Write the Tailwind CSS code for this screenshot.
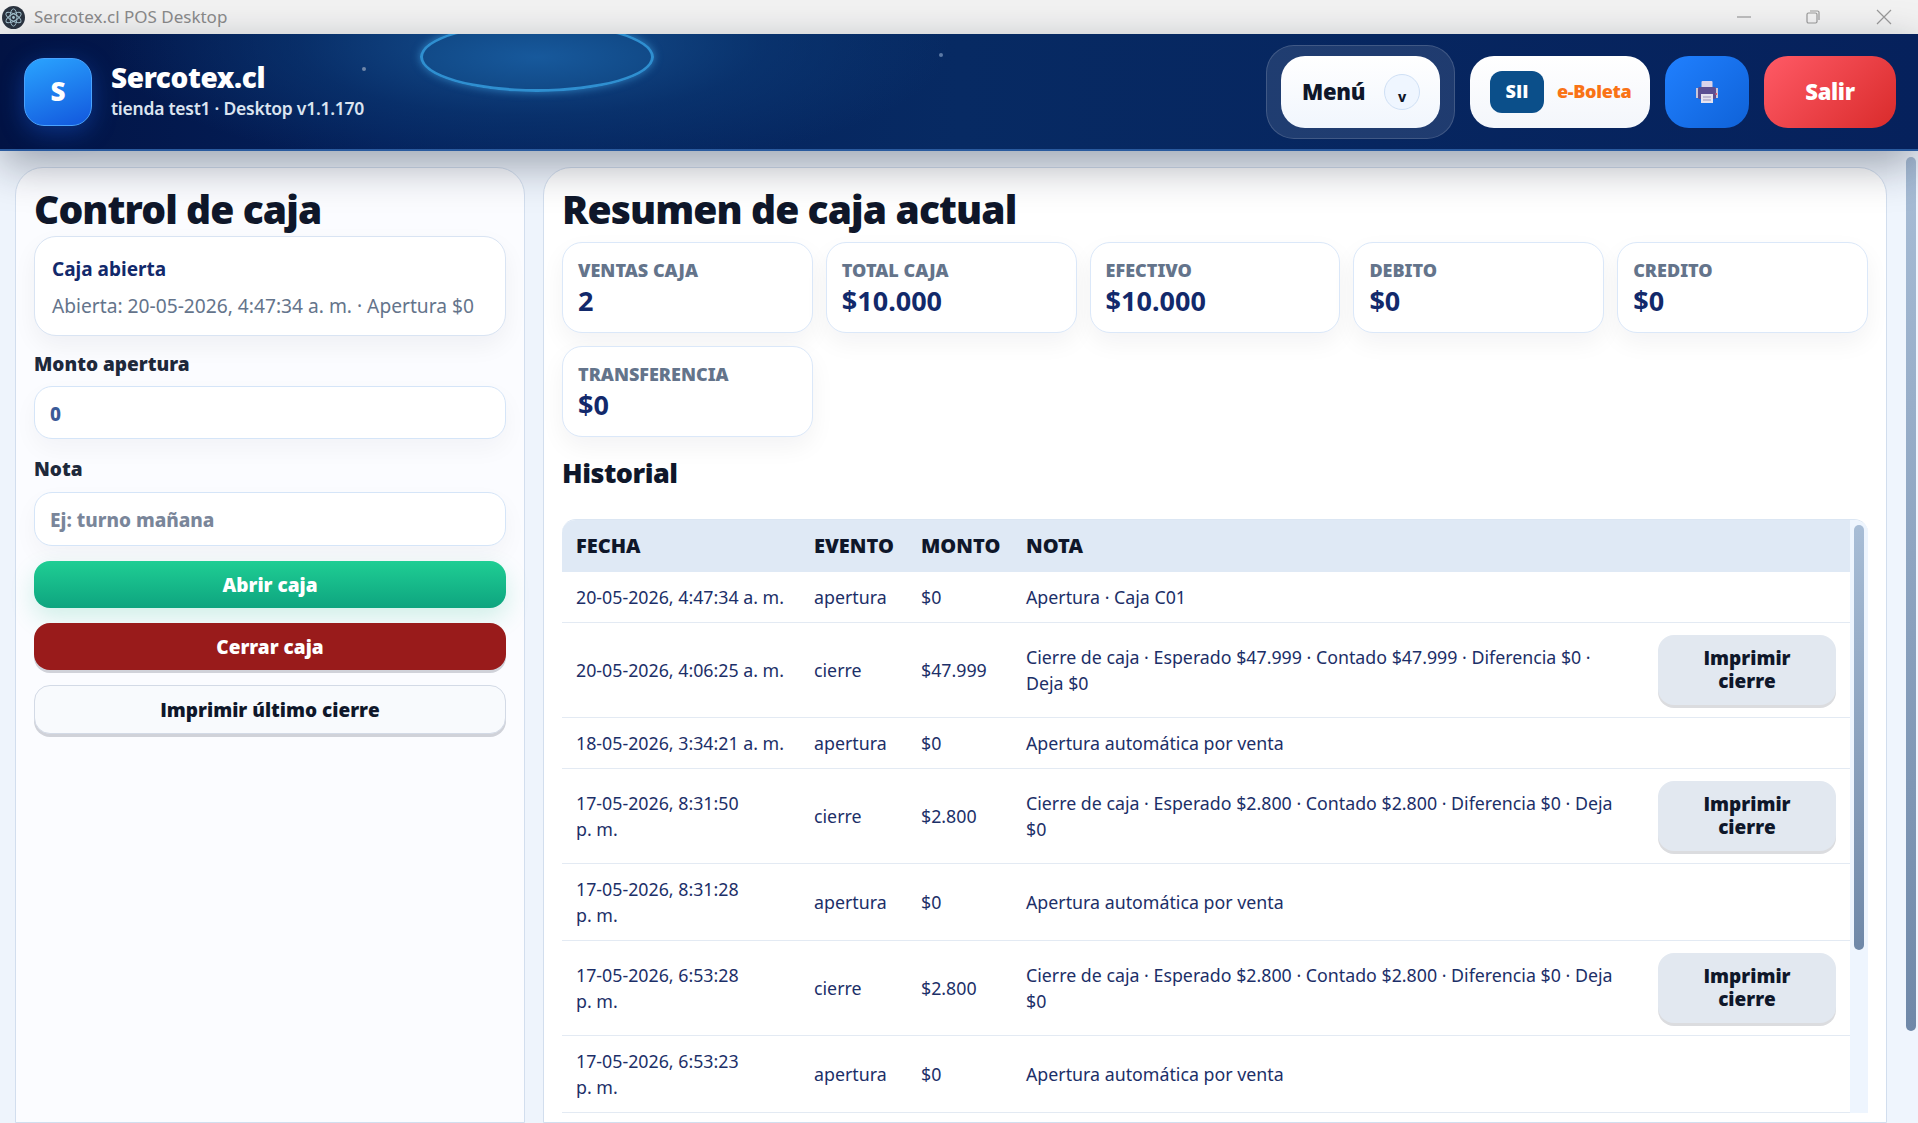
<!DOCTYPE html>
<html lang="es">
<head>
<meta charset="utf-8">
<title>Sercotex.cl POS Desktop</title>
<script src="https://cdn.jsdelivr.net/npm/@tailwindcss/browser@4"></script>
</head>
<body class="h-screen overflow-hidden flex flex-col bg-[#eef4fc] font-['Noto_Sans',sans-serif] text-[#1c2f68]">

  <!-- title bar -->
  <div class="h-[34px] shrink-0 bg-[#f2f2f2] flex items-center">
    <svg class="ml-[2px] w-[23px] h-[23px]" viewBox="0 0 20 20">
      <circle cx="10" cy="10" r="10" fill="#2b3440"/>
      <g fill="none" stroke="#a9c8d4" stroke-width=".8">
        <ellipse cx="10" cy="10" rx="7.500" ry="3" transform="rotate(30 10 10)"/>
        <ellipse cx="10" cy="10" rx="7.500" ry="3" transform="rotate(90 10 10)"/>
        <ellipse cx="10" cy="10" rx="7.500" ry="3" transform="rotate(150 10 10)"/>
      </g>
      <circle cx="10" cy="10" r="1.200" fill="#a9c8d4"/>
    </svg>
    <span class="ml-[9px] text-[17px] text-[#8a8a8a]">Sercotex.cl POS Desktop</span>
    <div class="ml-auto flex items-center">
      <svg class="w-[16px] h-[16px] mr-[53px]" viewBox="0 0 16 16"><path d="M1 8h14" stroke="#999" stroke-width="1.200"/></svg>
      <svg class="w-[16px] h-[16px] mr-[55px]" viewBox="0 0 16 16" fill="none" stroke="#999" stroke-width="1.200"><rect x="2" y="4" width="10" height="10" rx="1.500"/><path d="M5 2h7.500A1.500 1.500 0 0 1 14 3.500V11"/></svg>
      <svg class="w-[16px] h-[16px] mr-[26px]" viewBox="0 0 16 16"><path d="M1 1l14 14M15 1L1 15" stroke="#999" stroke-width="1.200"/></svg>
    </div>
  </div>

  <!-- header -->
  <header class="relative z-10 h-[117px] shrink-0 border-b-2 border-[#2a5a9e] bg-[radial-gradient(ellipse_420px_130px_at_530px_10px,#15508f_0%,rgba(12,60,120,0.55)_55%,rgba(6,33,92,0)_100%),linear-gradient(90deg,#021344_0%,#04205a_20%,#072a63_50%,#06215c_100%)] shadow-[0_14px_44px_rgba(15,23,42,0.36)] flex items-center">
    <div class="absolute inset-0 overflow-hidden">
      <div class="absolute left-[420px] top-[-12px] w-[234px] h-[70px] rounded-[50%] border-[3px] border-[#2f8fd0] bg-[radial-gradient(ellipse_at_center,#17599c,#0f4480)] shadow-[0_0_8px_rgba(70,170,235,0.6)]"></div>
      <div class="absolute left-[362px] top-[33px] w-[4px] h-[4px] rounded-full bg-[#6f86a8]"></div>
      <div class="absolute left-[939px] top-[19px] w-[4px] h-[4px] rounded-full bg-[#5b79a5]"></div>
    </div>
    <div class="relative ml-[24px] w-[68px] h-[68px] rounded-[20px] border border-[#4aa3ff] bg-[linear-gradient(160deg,#2aa4ff,#1257dd)] shadow-[0_6px_24px_rgba(30,110,255,0.35)] flex items-center justify-center text-white font-black text-[26px]">S</div>
    <div class="relative ml-[19px] text-white">
      <div class="text-[28px] leading-[35px] font-black tracking-[-0.4px] mt-[-2px]">Sercotex.cl</div>
      <div class="text-[17.500px] leading-[25px] mt-[1px] font-semibold tracking-[-0.25px] text-[#dbe4f0]">tienda test1 · Desktop v1.1.170</div>
    </div>
    <div class="relative ml-auto mr-[22px] flex items-center">
      <div class="p-[10px_14px] rounded-[28px] border border-white/15 bg-white/10">
        <button class="w-[159px] h-[72px] rounded-[24px] bg-[linear-gradient(180deg,#ffffff,#f1f6fd)] flex items-center pl-[21px] text-[#0f172a] font-black text-[22px] tracking-[-0.3px]">
          Menú
          <span class="ml-auto mr-[20px] w-[36px] h-[36px] rounded-full border border-[#cfe0f5] bg-[#eff6ff] flex items-end justify-center pb-[3px] text-[14px] leading-[18px] font-extrabold">v</span>
        </button>
      </div>
      <button class="ml-[15px] w-[180px] h-[72px] rounded-[24px] bg-[linear-gradient(180deg,#ffffff,#f3f6fb)] flex items-center pl-[20px]">
        <span class="w-[54px] h-[42px] rounded-[12px] bg-[#0b4f8a] text-white font-['Open_Sans',sans-serif] font-extrabold text-[18px] flex items-center justify-center">SII</span>
        <span class="ml-[13px] text-[#f97316] font-black text-[18px] tracking-[-0.3px]">e-Boleta</span>
      </button>
      <button class="ml-[15px] w-[84px] h-[72px] rounded-[24px] bg-[linear-gradient(135deg,#2080ff,#0f62d8)] flex items-center justify-center">
        <svg class="w-[24px] h-[24px]" viewBox="0 0 24 24">
          <rect x="6.500" y="1" width="11" height="8" rx="1" fill="#d9d3ea"/>
          <rect x="1" y="8" width="3" height="10" fill="#c9c6d8"/>
          <rect x="20" y="8" width="3" height="10" fill="#c9c6d8"/>
          <rect x="3" y="7" width="18" height="12" rx="1.500" fill="#5b4f93"/>
          <rect x="20.500" y="13" width="1.500" height="2" fill="#e0556a"/>
          <rect x="6" y="14" width="12" height="9" fill="#e6e3f0"/>
          <path d="M8 17h8M8 20h8" stroke="#9a93b8" stroke-width="1"/>
        </svg>
      </button>
      <button class="ml-[15px] w-[132px] h-[72px] rounded-[24px] bg-[linear-gradient(135deg,#ff5a66,#d92b2b)] text-white font-black text-[22px] tracking-[-0.3px]">Salir</button>
    </div>
  </header>

  <main class="flex-1 min-h-0 flex overflow-hidden">
    <div class="flex-1 min-w-0 flex gap-[18px] pl-[15px] pt-[16px]">

      <!-- left card -->
      <section class="w-[510px] shrink-0 rounded-t-[28px] border border-[#d2deee] bg-[#fbfcff] px-[18px] pt-[16px]">
        <h1 class="text-[39px] leading-[50px] font-black tracking-[-0.9px] text-[#0f172a]">Control de caja</h1>
        <div class="mt-[2px] h-[100px] rounded-[22px] border border-[#d9e4f3] bg-white shadow-[0_10px_24px_rgba(15,23,42,0.05)] px-[17px] pt-[18px]">
          <div class="text-[19px] leading-[28px] font-bold text-[#12296b]">Caja abierta</div>
          <div class="mt-[9px] text-[19.200px] leading-[28px] text-[#64748b]">Abierta: 20-05-2026, 4:47:34 a. m. · Apertura $0</div>
        </div>
        <label class="block mt-[15px] text-[19px] leading-[26px] font-black text-[#1e293b]">Monto apertura</label>
        <div class="mt-[9px] h-[53px] rounded-[18px] border border-[#d5e5f8] bg-white shadow-[0_10px_24px_rgba(15,23,42,0.04)] flex items-center px-[15px] pt-[3px] text-[19px] font-extrabold text-[#3b5a98]">0</div>
        <label class="block mt-[17px] text-[19px] leading-[26px] font-black text-[#1e293b]">Nota</label>
        <div class="mt-[10px] h-[54px] rounded-[18px] border border-[#d5e5f8] bg-white shadow-[0_10px_24px_rgba(15,23,42,0.04)] flex items-center px-[15px] pt-[2px] text-[19px] font-extrabold text-[#7a869a]">Ej: turno mañana</div>
        <button class="block w-full mt-[15px] h-[47px] rounded-[16px] bg-[linear-gradient(180deg,#1fce94,#0ea47f)] shadow-[0_10px_24px_rgba(16,185,129,0.18)] pt-[2px] text-white text-[19px] font-black">Abrir caja</button>
        <button class="block w-full mt-[15px] h-[47px] rounded-[16px] bg-[#991b1b] shadow-[0_3px_0_rgba(15,23,42,0.18)] pt-[2px] text-white text-[19px] font-black">Cerrar caja</button>
        <button class="block w-full mt-[15px] h-[49px] rounded-[16px] border border-[#d3dae6] bg-[#f8fafd] shadow-[0_3px_0_rgba(15,23,42,0.18)] pt-[2px] text-[#0f172a] font-['Open_Sans',sans-serif] text-[19px] font-extrabold">Imprimir último cierre</button>
      </section>

      <!-- right card -->
      <section class="flex-1 min-w-0 rounded-t-[28px] border border-[#d2deee] bg-white px-[18px] pt-[16px]">
        <h1 class="text-[39px] leading-[50px] font-black tracking-[-0.9px] text-[#0f172a]">Resumen de caja actual</h1>
        <div class="mt-[8px] grid grid-cols-5 gap-[13px]">
          <div class="h-[91px] rounded-[20px] border border-[#dbe8f9] bg-white shadow-[0_10px_24px_rgba(15,23,42,0.05)] px-[15px] pt-[15px]">
            <div class="text-[18px] leading-[24px] font-black text-[#64748b]">VENTAS CAJA</div>
            <div class="mt-[1px] text-[27px] leading-[36px] font-bold text-[#12296b]">2</div>
          </div>
          <div class="h-[91px] rounded-[20px] border border-[#dbe8f9] bg-white shadow-[0_10px_24px_rgba(15,23,42,0.05)] px-[15px] pt-[15px]">
            <div class="text-[18px] leading-[24px] font-black text-[#64748b]">TOTAL CAJA</div>
            <div class="mt-[1px] text-[27px] leading-[36px] font-bold text-[#12296b]">$10.000</div>
          </div>
          <div class="h-[91px] rounded-[20px] border border-[#dbe8f9] bg-white shadow-[0_10px_24px_rgba(15,23,42,0.05)] px-[15px] pt-[15px]">
            <div class="text-[18px] leading-[24px] font-black text-[#64748b]">EFECTIVO</div>
            <div class="mt-[1px] text-[27px] leading-[36px] font-bold text-[#12296b]">$10.000</div>
          </div>
          <div class="h-[91px] rounded-[20px] border border-[#dbe8f9] bg-white shadow-[0_10px_24px_rgba(15,23,42,0.05)] px-[15px] pt-[15px]">
            <div class="text-[18px] leading-[24px] font-black text-[#64748b]">DEBITO</div>
            <div class="mt-[1px] text-[27px] leading-[36px] font-bold text-[#12296b]">$0</div>
          </div>
          <div class="h-[91px] rounded-[20px] border border-[#dbe8f9] bg-white shadow-[0_10px_24px_rgba(15,23,42,0.05)] px-[15px] pt-[15px]">
            <div class="text-[18px] leading-[24px] font-black text-[#64748b]">CREDITO</div>
            <div class="mt-[1px] text-[27px] leading-[36px] font-bold text-[#12296b]">$0</div>
          </div>
          <div class="h-[91px] rounded-[20px] border border-[#dbe8f9] bg-white shadow-[0_10px_24px_rgba(15,23,42,0.05)] px-[15px] pt-[15px]">
            <div class="text-[18px] leading-[24px] font-black text-[#64748b]">TRANSFERENCIA</div>
            <div class="mt-[1px] text-[27px] leading-[36px] font-bold text-[#12296b]">$0</div>
          </div>
        </div>
        <h2 class="mt-[18px] text-[27px] leading-[36px] font-black tracking-[-0.5px] text-[#0f172a]">Historial</h2>

        <div class="mt-[28px] flex rounded-t-[14px] overflow-hidden border-t border-[#dbe6f3]">
          <table class="flex-1 min-w-0 table-fixed border-collapse text-[17.800px] leading-[26px]">
            <colgroup><col class="w-[238px]"><col class="w-[107px]"><col class="w-[105px]"><col><col class="w-[206px]"></colgroup>
            <thead>
              <tr class="h-[52px] bg-[#dfe9f5] text-left text-[#0f172a] font-black text-[20px]">
                <th class="pl-[14px] font-black">FECHA</th><th class="pl-[14px] font-black">EVENTO</th><th class="pl-[14px] font-black">MONTO</th><th class="pl-[14px] font-black">NOTA</th><th></th>
              </tr>
            </thead>
            <tbody>
              <tr class="h-[50px] border-b border-[#e3eaf3]">
                <td class="pl-[14px]">20-05-2026, 4:47:34 a. m.</td><td class="pl-[14px]">apertura</td><td class="pl-[14px]">$0</td><td class="pl-[14px]">Apertura · Caja C01</td><td></td>
              </tr>
              <tr class="h-[95px] border-b border-[#e3eaf3]">
                <td class="pl-[14px]">20-05-2026, 4:06:25 a. m.</td><td class="pl-[14px]">cierre</td><td class="pl-[14px]">$47.999</td><td class="pl-[14px]">Cierre de caja · Esperado $47.999 · Contado $47.999 · Diferencia $0 ·<br>Deja $0</td>
                <td class="pl-[14px]"><button class="w-[178px] h-[70px] rounded-[16px] bg-[#e2e8f0] shadow-[0_3px_0_rgba(15,23,42,0.15)] text-[#0f172a] font-['Open_Sans',sans-serif] font-extrabold text-[19px] leading-[23px]">Imprimir<br>cierre</button></td>
              </tr>
              <tr class="h-[51px] border-b border-[#e3eaf3]">
                <td class="pl-[14px]">18-05-2026, 3:34:21 a. m.</td><td class="pl-[14px]">apertura</td><td class="pl-[14px]">$0</td><td class="pl-[14px]">Apertura automática por venta</td><td></td>
              </tr>
              <tr class="h-[95px] border-b border-[#e3eaf3]">
                <td class="pl-[14px]">17-05-2026, 8:31:50<br>p. m.</td><td class="pl-[14px]">cierre</td><td class="pl-[14px]">$2.800</td><td class="pl-[14px]">Cierre de caja · Esperado $2.800 · Contado $2.800 · Diferencia $0 · Deja<br>$0</td>
                <td class="pl-[14px]"><button class="w-[178px] h-[70px] rounded-[16px] bg-[#e2e8f0] shadow-[0_3px_0_rgba(15,23,42,0.15)] text-[#0f172a] font-['Open_Sans',sans-serif] font-extrabold text-[19px] leading-[23px]">Imprimir<br>cierre</button></td>
              </tr>
              <tr class="h-[77px] border-b border-[#e3eaf3]">
                <td class="pl-[14px]">17-05-2026, 8:31:28<br>p. m.</td><td class="pl-[14px]">apertura</td><td class="pl-[14px]">$0</td><td class="pl-[14px]">Apertura automática por venta</td><td></td>
              </tr>
              <tr class="h-[95px] border-b border-[#e3eaf3]">
                <td class="pl-[14px]">17-05-2026, 6:53:28<br>p. m.</td><td class="pl-[14px]">cierre</td><td class="pl-[14px]">$2.800</td><td class="pl-[14px]">Cierre de caja · Esperado $2.800 · Contado $2.800 · Diferencia $0 · Deja<br>$0</td>
                <td class="pl-[14px]"><button class="w-[178px] h-[70px] rounded-[16px] bg-[#e2e8f0] shadow-[0_3px_0_rgba(15,23,42,0.15)] text-[#0f172a] font-['Open_Sans',sans-serif] font-extrabold text-[19px] leading-[23px]">Imprimir<br>cierre</button></td>
              </tr>
              <tr class="h-[77px] border-b border-[#e3eaf3]">
                <td class="pl-[14px]">17-05-2026, 6:53:23<br>p. m.</td><td class="pl-[14px]">apertura</td><td class="pl-[14px]">$0</td><td class="pl-[14px]">Apertura automática por venta</td><td></td>
              </tr>
            </tbody>
          </table>
          <!-- inner scrollbar -->
          <div class="w-[18px] shrink-0 bg-[#eef5fe] flex flex-col items-start pl-[4px] pt-[5px]">
            <div class="w-[10px] h-[425px] rounded-full bg-[linear-gradient(180deg,#a8bdd6,#6f88a8)]"></div>
          </div>
        </div>
      </section>
    </div>

    <!-- page scrollbar -->
    <div class="w-[31px] shrink-0 bg-[#eff5fd] flex flex-col items-end pr-[2px] pt-[6px]">
      <div class="w-[10px] h-[874px] rounded-full bg-[linear-gradient(180deg,#a8bdd6,#6f88a8)]"></div>
    </div>
  </main>
</body>
</html>
